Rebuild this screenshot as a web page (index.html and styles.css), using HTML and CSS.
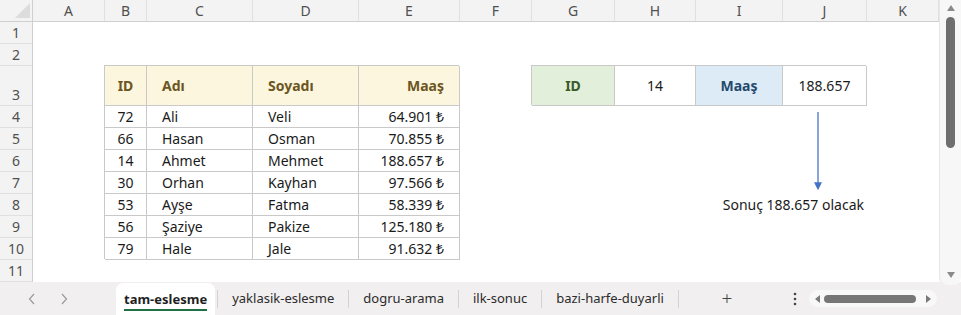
FILE: index.html
```html
<!DOCTYPE html>
<html lang="tr">
<head>
<meta charset="utf-8">
<title>tam-eslesme</title>
<link rel="stylesheet" href="styles.css">
</head>
<body>
<div class="app">
  <div class="main">
    <div class="sheet">
      <div class="corner"><span class="corner-tri"></span></div>
      <div class="colheads">
        <div class="ch">A</div><div class="ch">B</div><div class="ch">C</div><div class="ch">D</div>
        <div class="ch">E</div><div class="ch">F</div><div class="ch">G</div><div class="ch">H</div>
        <div class="ch">I</div><div class="ch">J</div><div class="ch">K</div>
      </div>
      <div class="rowheads">
        <div class="rh">1</div><div class="rh">2</div><div class="rh rh-tall">3</div><div class="rh">4</div>
        <div class="rh">5</div><div class="rh">6</div><div class="rh">7</div><div class="rh">8</div>
        <div class="rh">9</div><div class="rh">10</div><div class="rh">11</div>
      </div>

      <div class="data-table">
        <div class="c hd center">ID</div><div class="c hd left">Adı</div><div class="c hd left">Soyadı</div><div class="c hd right">Maaş</div>
        <div class="c center">72</div><div class="c left">Ali</div><div class="c left">Veli</div><div class="c right">64.901 ₺</div>
        <div class="c center">66</div><div class="c left">Hasan</div><div class="c left">Osman</div><div class="c right">70.855 ₺</div>
        <div class="c center">14</div><div class="c left">Ahmet</div><div class="c left">Mehmet</div><div class="c right">188.657 ₺</div>
        <div class="c center">30</div><div class="c left">Orhan</div><div class="c left">Kayhan</div><div class="c right">97.566 ₺</div>
        <div class="c center">53</div><div class="c left">Ayşe</div><div class="c left">Fatma</div><div class="c right">58.339 ₺</div>
        <div class="c center">56</div><div class="c left">Şaziye</div><div class="c left">Pakize</div><div class="c right">125.180 ₺</div>
        <div class="c center">79</div><div class="c left">Hale</div><div class="c left">Jale</div><div class="c right">91.632 ₺</div>
      </div>

      <div class="lookup">
        <div class="c center lk-id">ID</div>
        <div class="c center">14</div>
        <div class="c center lk-maas">Maaş</div>
        <div class="c center">188.657</div>
      </div>

      <div class="note">
        <svg class="arrow" width="10" height="80" viewBox="0 0 10 80">
          <line x1="5" y1="0" x2="5" y2="72" stroke="#4472c4" stroke-width="1.3"/>
          <polygon points="1,71 9,71 5,79" fill="#4472c4"/>
        </svg>
        <div class="note-text">Sonuç 188.657 olacak</div>
      </div>
    </div>

    <div class="vscroll">
      <svg class="vs-arrow" width="10" height="8" viewBox="0 0 10 8"><polygon points="1,7 9,7 5,1" fill="#8a8a8a"/></svg>
      <div class="vs-thumb"></div>
      <div class="vs-space"></div>
      <svg class="vs-arrow" width="10" height="8" viewBox="0 0 10 8"><polygon points="1,1 9,1 5,7" fill="#8a8a8a"/></svg>
    </div>
  </div>

  <div class="tabbar">
    <div class="nav">
      <svg width="8" height="12" viewBox="0 0 8 12"><polyline points="6,1 1.5,6 6,11" fill="none" stroke="#9a9a9a" stroke-width="1.2"/></svg>
      <svg width="8" height="12" viewBox="0 0 8 12"><polyline points="2,1 6.5,6 2,11" fill="none" stroke="#9a9a9a" stroke-width="1.2"/></svg>
    </div>
    <div class="tab active"><span class="tab-label">tam-eslesme</span></div>
    <div class="sep"></div>
    <div class="tab">yaklasik-eslesme</div>
    <div class="sep"></div>
    <div class="tab">dogru-arama</div>
    <div class="sep"></div>
    <div class="tab">ilk-sonuc</div>
    <div class="sep"></div>
    <div class="tab">bazi-harfe-duyarli</div>
    <div class="sep"></div>
    <div class="add">+</div>
    <div class="more">
      <svg width="4" height="14" viewBox="0 0 4 14"><circle cx="2" cy="2" r="1.3" fill="#444"/><circle cx="2" cy="7" r="1.3" fill="#444"/><circle cx="2" cy="12" r="1.3" fill="#444"/></svg>
    </div>
    <div class="hscroll">
      <svg width="8" height="10" viewBox="0 0 8 10"><polygon points="6,1 6,9 1,5" fill="#7a7a7a"/></svg>
      <div class="hs-thumb"></div>
      <svg width="8" height="10" viewBox="0 0 8 10"><polygon points="2,1 2,9 7,5" fill="#7a7a7a"/></svg>
    </div>
  </div>
</div>
</body>
</html>
```

FILE: styles.css
```css
* { box-sizing: border-box; }

html, body {
  margin: 0;
  padding: 0;
  background: #ffffff;
}

body {
  width: 961px;
  height: 315px;
  overflow: hidden;
  font-family: "Noto Sans", "Open Sans", sans-serif;
  font-size: 14px;
  color: #1a1a1a;
}

.app {
  display: flex;
  flex-direction: column;
  height: 315px;
}

.main {
  display: flex;
  height: 282px;
}

/* ---------- sheet grid ---------- */
.sheet {
  display: grid;
  grid-template-columns: 33px 72px 42px 106px 106px 101px 72px 83px 81px 87px 84px 72px;
  grid-template-rows: 22px 22px 22px 40px repeat(8, 22px);
  width: 939px;
  background: #ffffff;
}

.corner {
  grid-column: 1;
  grid-row: 1;
  background: #f3f3f3;
  border-right: 1px solid #cfcfcf;
  border-bottom: 1px solid #cfcfcf;
  display: flex;
  align-items: flex-end;
  justify-content: flex-end;
  padding: 0 2px 3px 0;
}

.corner-tri {
  width: 0;
  height: 0;
  border-left: 15px solid transparent;
  border-bottom: 15px solid #dcdcdc;
}

.colheads {
  grid-column: 2 / -1;
  grid-row: 1;
  display: grid;
  grid-template-columns: subgrid;
  background: #f3f3f3;
  border-bottom: 1px solid #cfcfcf;
}

.ch {
  display: flex;
  align-items: center;
  justify-content: center;
  border-right: 1px solid #e0e0e0;
  color: #505050;
  font-size: 14px;
  line-height: 1;
}

.rowheads {
  grid-column: 1;
  grid-row: 2 / -1;
  display: grid;
  grid-template-rows: subgrid;
  background: #f3f3f3;
  border-right: 1px solid #cfcfcf;
}

.rh {
  display: flex;
  align-items: center;
  justify-content: center;
  border-bottom: 1px solid #e0e0e0;
  color: #505050;
  font-size: 14px;
  line-height: 1;
}

.rh-tall {
  align-items: flex-end;
  padding-bottom: 3px;
}

/* ---------- cells ---------- */
.c {
  display: flex;
  align-items: center;
  border-right: 1px solid #c9c9c9;
  border-bottom: 1px solid #c9c9c9;
  white-space: nowrap;
  line-height: 1;
}

.center { justify-content: center; }
.left { justify-content: flex-start; padding-left: 15px; }
.right { justify-content: flex-end; padding-right: 15px; }

.data-table {
  grid-column: 3 / 7;
  grid-row: 4 / 12;
  display: grid;
  grid-template-columns: subgrid;
  grid-template-rows: subgrid;
  box-shadow: -1px -1px 0 #c9c9c9;
}

.hd {
  background: #fcf6de;
  color: #6b5522;
  font-weight: 700;
}

.lookup {
  grid-column: 8 / 12;
  grid-row: 4;
  display: grid;
  grid-template-columns: subgrid;
  box-shadow: -1px -1px 0 #c9c9c9;
}

.lk-id {
  background: #e2efda;
  color: #3a5a27;
  font-weight: 700;
}

.lk-maas {
  background: #ddebf7;
  color: #24496d;
  font-weight: 700;
}

/* ---------- note / arrow ---------- */
.note {
  grid-column: 10 / 12;
  grid-row: 5 / 10;
  display: flex;
  flex-direction: column;
  align-items: flex-end;
  padding-top: 6px;
}

.arrow {
  display: block;
  margin-right: 44px;
}

.note-text {
  margin-top: 3px;
  height: 22px;
  display: flex;
  align-items: center;
  padding-right: 3px;
  white-space: nowrap;
  line-height: 1;
}

/* ---------- vertical scrollbar ---------- */
.vscroll {
  width: 22px;
  height: 285px;
  background: #f7f7f7;
  border-left: 1px solid #e6e6e6;
  border-radius: 0 0 8px 8px;
  display: flex;
  flex-direction: column;
  align-items: center;
  padding: 4px 0 6px;
  position: relative;
  z-index: 1;
}

.vs-arrow { display: block; }

.vs-thumb {
  margin-top: 5px;
  width: 9px;
  height: 131px;
  border-radius: 5px;
  background: #6e6e6e;
}

.vs-space { flex: 1; }

/* ---------- tab bar ---------- */
.tabbar {
  height: 33px;
  background: #f1efef;
  display: flex;
  align-items: center;
  font-size: 13px;
  color: #2b2b2b;
}

.nav {
  width: 116px;
  display: flex;
  align-items: center;
  gap: 24px;
  padding-left: 28px;
}

.nav svg { display: block; }

.tab {
  padding: 0 14px;
  white-space: nowrap;
  line-height: 1;
}

.tab.active {
  align-self: flex-end;
  height: 32px;
  background: #ffffff;
  border-radius: 7px 7px 0 0;
  padding: 0 8px;
  display: flex;
  align-items: center;
  font-weight: 700;
  color: #1f1f1f;
  margin-right: 2px;
}

.tab-label {
  display: block;
  padding: 5px 0 3px;
  border-bottom: 2px solid #1e7145;
  margin-top: 1px;
}

.sep {
  width: 1px;
  height: 18px;
  background: #d4d2d2;
}

.add {
  margin-left: 40px;
  font-size: 19px;
  font-weight: 300;
  color: #444;
  line-height: 1;
  width: 16px;
  text-align: center;
}

.more {
  margin-left: 58px;
  width: 4px;
  display: flex;
  align-items: center;
}

.more svg { display: block; }

.hscroll {
  margin-left: 12px;
  width: 128px;
  height: 17px;
  border-radius: 9px;
  background: #f9f8f8;
  display: flex;
  align-items: center;
  padding: 0 5px;
  gap: 2px;
}

.hscroll svg { display: block; }

.hs-thumb {
  flex: 1;
  height: 8px;
  border-radius: 4px;
  background: #767676;
  margin: 0 6px 0 0;
}
```
